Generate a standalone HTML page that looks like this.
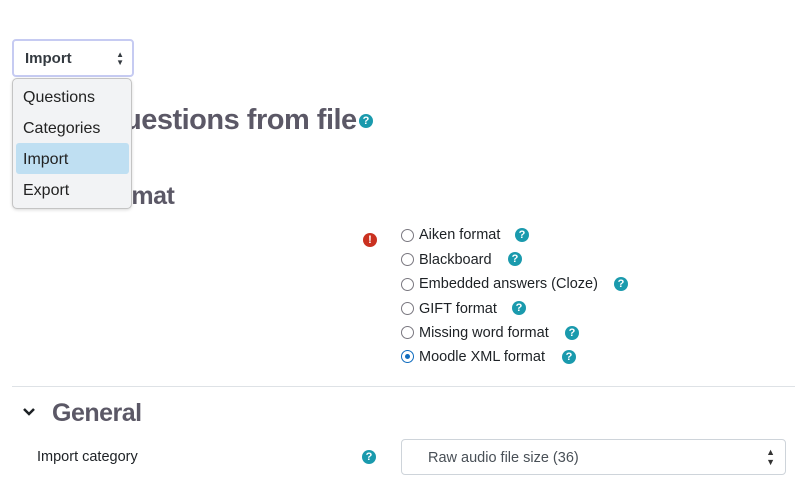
<!DOCTYPE html>
<html><head><meta charset="utf-8"><style>
body{margin:0;width:795px;height:482px;background:#fff;font-family:"Liberation Sans",sans-serif;color:#1d2125;position:relative;overflow:hidden}
.a{position:absolute;white-space:nowrap}
.h{font-weight:bold;color:#5b5866;letter-spacing:-0.5px}
.q{display:inline-block;width:14px;height:14px;border-radius:50%;background:#1a9aad;color:#fff;font-size:11px;font-weight:bold;text-align:center;line-height:14px}
.r{position:absolute;width:11px;height:11px;border:1.5px solid #7a7880;border-radius:50%}
.t{position:absolute;font-size:14.5px}
</style></head><body>
<div class="a h" style="left:12px;top:104px;font-size:29px">Import questions from file<span class="q" style="vertical-align:middle;margin-left:2px">?</span></div>
<div class="a h" style="left:52px;top:182px;font-size:25px">File format</div>
<div class="a" style="left:363px;top:233px;width:14px;height:14px;border-radius:50%;background:#ca3120;color:#fff;font-size:11px;font-weight:bold;text-align:center;line-height:14px">!</div>
<div class="r" style="left:401px;top:229px"></div><div class="t" style="left:419px;top:227px">Aiken format</div><span class="q a" style="left:515px;top:228px">?</span>
<div class="r" style="left:401px;top:253px"></div><div class="t" style="left:419px;top:252px">Blackboard</div><span class="q a" style="left:508px;top:252px">?</span>
<div class="r" style="left:401px;top:278px"></div><div class="t" style="left:419px;top:276px">Embedded answers (Cloze)</div><span class="q a" style="left:614px;top:277px">?</span>
<div class="r" style="left:401px;top:302px"></div><div class="t" style="left:419px;top:301px">GIFT format</div><span class="q a" style="left:512px;top:301px">?</span>
<div class="r" style="left:401px;top:326px"></div><div class="t" style="left:419px;top:325px">Missing word format</div><span class="q a" style="left:565px;top:326px">?</span>
<div class="r" style="left:401px;top:350px;border-color:#0f6cbf"><div style="width:5px;height:5px;background:#0f6cbf;border-radius:50%;margin:3px"></div></div><div class="t" style="left:419px;top:349px">Moodle XML format</div><span class="q a" style="left:562px;top:350px">?</span>
<div class="a" style="left:12px;top:386px;width:783px;height:1px;background:#dee2e6"></div>
<svg class="a" style="left:22px;top:407px" width="14" height="10" viewBox="0 0 14 10"><path d="M2 2 L7 7 L12 2" stroke="#1d2125" stroke-width="2.5" fill="none"/></svg>
<div class="a h" style="left:52px;top:399px;font-size:25px">General</div>
<div class="a" style="left:37px;top:449px;font-size:14.5px">Import category</div>
<span class="q a" style="left:362px;top:450px">?</span>
<div class="a" style="left:401px;top:439px;width:383px;height:34px;border:1px solid #ced4da;border-radius:4px;font-size:14.5px;line-height:36px;color:#495057;text-indent:26px">Raw audio file size (36)<span style="position:absolute;right:10px;font-size:9px;color:#333;text-indent:0;line-height:10px;top:7px">▲<br>▼</span></div>
<div class="a" style="left:12px;top:39px;width:118px;height:34px;border:2px solid #c6cbf2;border-radius:4px;background:#fff;font-size:15px;font-weight:bold;color:#343a40;line-height:36px;text-indent:11px">Import<span style="position:absolute;right:8px;top:10px;font-size:8px;line-height:8px;text-indent:0">▲<br>▼</span></div>
<div class="a" style="left:12px;top:78px;width:118px;height:129px;border:1px solid #c4c4c4;border-radius:5px;background:#f2f3f5;font-size:16px;color:#222;box-shadow:0 1px 3px rgba(0,0,0,.15)">
<div style="position:absolute;left:10px;top:10px">Questions</div>
<div style="position:absolute;left:10px;top:41px">Categories</div>
<div style="position:absolute;left:3px;top:64px;width:113px;height:31px;background:#bfdff2;border-radius:3px"></div>
<div style="position:absolute;left:10px;top:72px">Import</div>
<div style="position:absolute;left:10px;top:103px">Export</div>
</div>
</body></html>
